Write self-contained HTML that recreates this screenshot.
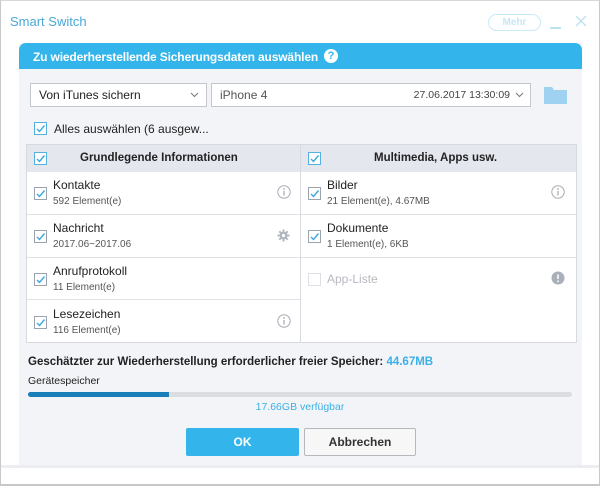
<!DOCTYPE html>
<html><head><meta charset="utf-8"><style>
*{margin:0;padding:0;box-sizing:border-box}
body{width:600px;height:486px;background:#fff;font-family:"Liberation Sans",sans-serif;position:relative;overflow:hidden;color:#222}
.a{position:absolute}
.win{left:0;top:0;width:600px;height:486px;border:1px solid #c8c8c8;border-top:1px solid #d8d8d8;border-bottom:2px solid #c8c8c8}
.cb{position:absolute;width:13px;height:13px;border:1px solid #9aa3ae;background:#fff}
.cb svg{position:absolute;left:0px;top:0px}
.sel{border:1px solid #c4c8ce;background:#fff;font-size:12px;height:24px;line-height:22px;padding-left:8px}
.t1{font-size:12px;color:#222}
.t2{font-size:10px;color:#555}
.line{background:#e0e2e6;height:1px}
</style></head><body>
<div class="a win"></div>
<div class="a" style="left:10px;top:14px;font-size:13px;color:#4aa8d8">Smart Switch</div>
<div class="a" style="left:488px;top:14px;width:53px;height:17px;border:1.5px solid #c9eaf8;border-radius:9px;font-size:10px;color:#c9e6f5;font-weight:bold;display:flex;align-items:center;justify-content:center">Mehr</div>
<div class="a" style="left:550px;top:27px;width:11px;height:1.5px;background:#bfe2f3"></div>
<svg class="a" style="left:575px;top:15px" width="12" height="12"><path d="M1 1L11 11M11 1L1 11" stroke="#bfe2f3" stroke-width="1.5"/></svg>
<div class="a" style="left:19px;top:43px;width:563px;height:423px;background:#f3f4f8"></div>
<div class="a" style="left:19px;top:43px;width:563px;height:26px;background:#33b4ea;border-radius:7px 7px 0 0"></div>
<div class="a" style="left:33px;top:50px;font-size:12px;letter-spacing:-0.15px;color:#fff;font-weight:bold;white-space:nowrap;width:285px;overflow:hidden">Zu wiederherstellende Sicherungsdaten auswählen</div>
<div class="a" style="left:324px;top:49px;width:14px;height:14px;border-radius:7px;background:#fff;color:#33b4ea;font-size:11px;font-weight:bold;text-align:center;line-height:14px">?</div>
<div class="a sel" style="left:30px;top:83px;width:177px">Von iTunes sichern</div>
<svg class="a" style="left:190px;top:92px" width="9" height="6"><path d="M1 1L4.5 4.5L8 1" stroke="#777" fill="none"/></svg>
<div class="a sel" style="left:211px;top:83px;width:320px;color:#555">iPhone 4</div>
<div class="a" style="left:380px;top:89px;width:130px;text-align:right;font-size:10.5px;color:#444">27.06.2017 13:30:09</div>
<svg class="a" style="left:515px;top:92px" width="9" height="6"><path d="M1 1L4.5 4.5L8 1" stroke="#777" fill="none"/></svg>
<svg class="a" style="left:544px;top:86px" width="23" height="18"><path d="M0 1h8l2 3h13v14H0z" fill="#9fd2f0"/></svg>
<div class="cb" style="left:34px;top:122px;border-color:#55b0e0"><svg width="11" height="11"><path d="M2 6l2.5 2.5L9.5 2.5" stroke="#3aa8e0" stroke-width="1.4" fill="none"/></svg></div>
<div class="a t1" style="left:54px;top:122px">Alles auswählen (6 ausgew...</div>
<div class="a" style="left:26px;top:144px;width:551px;height:199px;background:#fff;border:1px solid #d6d9de"></div>
<div class="a" style="left:27px;top:145px;width:549px;height:27px;background:#e4e7ee"></div>
<div class="a" style="left:300px;top:145px;width:1px;height:197px;background:#d6d9de"></div>
<div class="cb" style="left:34px;top:152px;border-color:#55b0e0"><svg width="11" height="11"><path d="M2 6l2.5 2.5L9.5 2.5" stroke="#3aa8e0" stroke-width="1.4" fill="none"/></svg></div>
<div class="a" style="left:80px;top:152px;font-size:11.5px;font-weight:bold">Grundlegende Informationen</div>
<div class="cb" style="left:308px;top:152px;border-color:#55b0e0"><svg width="11" height="11"><path d="M2 6l2.5 2.5L9.5 2.5" stroke="#3aa8e0" stroke-width="1.4" fill="none"/></svg></div>
<div class="a" style="left:374px;top:152px;font-size:11.5px;font-weight:bold">Multimedia, Apps usw.</div>
<div class="a line" style="left:27px;top:214px;width:549px"></div>
<div class="a line" style="left:27px;top:257px;width:549px"></div>
<div class="a line" style="left:27px;top:299px;width:273px"></div>

<div class="cb" style="left:34px;top:187px"><svg width="11" height="11"><path d="M2 6l2.5 2.5L9.5 2.5" stroke="#3aa8e0" stroke-width="1.4" fill="none"/></svg></div>
<div class="a t1" style="left:53px;top:178px">Kontakte</div><div class="a t2" style="left:53px;top:196px">592 Element(e)</div>
<div class="cb" style="left:34px;top:230px"><svg width="11" height="11"><path d="M2 6l2.5 2.5L9.5 2.5" stroke="#3aa8e0" stroke-width="1.4" fill="none"/></svg></div>
<div class="a t1" style="left:53px;top:221px">Nachricht</div><div class="a t2" style="left:53px;top:239px">2017.06~2017.06</div>
<div class="cb" style="left:34px;top:273px"><svg width="11" height="11"><path d="M2 6l2.5 2.5L9.5 2.5" stroke="#3aa8e0" stroke-width="1.4" fill="none"/></svg></div>
<div class="a t1" style="left:53px;top:264px">Anrufprotokoll</div><div class="a t2" style="left:53px;top:282px">11 Element(e)</div>
<div class="cb" style="left:34px;top:316px"><svg width="11" height="11"><path d="M2 6l2.5 2.5L9.5 2.5" stroke="#3aa8e0" stroke-width="1.4" fill="none"/></svg></div>
<div class="a t1" style="left:53px;top:307px">Lesezeichen</div><div class="a t2" style="left:53px;top:325px">116 Element(e)</div>

<div class="cb" style="left:308px;top:187px"><svg width="11" height="11"><path d="M2 6l2.5 2.5L9.5 2.5" stroke="#3aa8e0" stroke-width="1.4" fill="none"/></svg></div>
<div class="a t1" style="left:327px;top:178px">Bilder</div><div class="a t2" style="left:327px;top:196px">21 Element(e), 4.67MB</div>
<div class="cb" style="left:308px;top:230px"><svg width="11" height="11"><path d="M2 6l2.5 2.5L9.5 2.5" stroke="#3aa8e0" stroke-width="1.4" fill="none"/></svg></div>
<div class="a t1" style="left:327px;top:221px">Dokumente</div><div class="a t2" style="left:327px;top:239px">1 Element(e), 6KB</div>
<div class="cb" style="left:308px;top:273px;border-color:#dcdfe3"></div>
<div class="a t1" style="left:327px;top:272px;color:#b5b9be">App-Liste</div>

<svg class="a" style="left:277px;top:185px" width="14" height="14"><circle cx="7" cy="7" r="6.2" fill="none" stroke="#a8acb2"/><path d="M7 6v4.5" stroke="#a8acb2" stroke-width="1.3"/><circle cx="7" cy="4" r="0.9" fill="#a8acb2"/></svg>
<svg class="a" style="left:277px;top:314px" width="14" height="14"><circle cx="7" cy="7" r="6.2" fill="none" stroke="#a8acb2"/><path d="M7 6v4.5" stroke="#a8acb2" stroke-width="1.3"/><circle cx="7" cy="4" r="0.9" fill="#a8acb2"/></svg>
<svg class="a" style="left:551px;top:185px" width="14" height="14"><circle cx="7" cy="7" r="6.2" fill="none" stroke="#a8acb2"/><path d="M7 6v4.5" stroke="#a8acb2" stroke-width="1.3"/><circle cx="7" cy="4" r="0.9" fill="#a8acb2"/></svg>
<svg class="a" style="left:551px;top:271px" width="14" height="14"><circle cx="7" cy="7" r="6.5" fill="#a9b0b9"/><path d="M7 3.5v4.5" stroke="#fff" stroke-width="1.6"/><circle cx="7" cy="10.3" r="0.9" fill="#fff"/></svg>
<svg class="a" style="left:277px;top:229px" width="13" height="13" viewBox="0 0 13 13"><g stroke="#b0b6bd" stroke-width="2"><path d="M6.5 0.5v12M0.5 6.5h12M2.3 2.3l8.4 8.4M10.7 2.3l-8.4 8.4"/></g><circle cx="6.5" cy="6.5" r="3.8" fill="#b0b6bd"/><circle cx="6.5" cy="6.5" r="1.6" fill="#fff"/></svg>

<div class="a" style="left:28px;top:356px;font-size:11.5px;font-weight:bold">Geschätzter zur Wiederherstellung erforderlicher freier Speicher: <span style="color:#3ab0e6">44.67MB</span></div>
<div class="a" style="left:28px;top:375px;font-size:10.5px">Gerätespeicher</div>
<div class="a" style="left:28px;top:392px;width:544px;height:5px;background:#dcdde0;border-radius:3px"></div>
<div class="a" style="left:28px;top:392px;width:141px;height:5px;background:#1a7fb8;border-radius:3px 0 0 3px"></div>
<div class="a" style="left:0;top:401px;width:600px;text-align:center;font-size:10.5px;color:#3ab0e6">17.66GB verfügbar</div>
<div class="a" style="left:186px;top:428px;width:113px;height:28px;background:#33b4ea;border-radius:2px;color:#fff;font-weight:bold;font-size:12px;text-align:center;line-height:28px">OK</div>
<div class="a" style="left:304px;top:428px;width:112px;height:28px;background:#f7f7f7;border:1px solid #b5b8bc;border-radius:2px;color:#333;font-weight:bold;font-size:12px;text-align:center;line-height:26px">Abbrechen</div>
<div class="a" style="left:1px;top:465px;width:598px;height:3px;background:#ecedf0"></div>
</body></html>
